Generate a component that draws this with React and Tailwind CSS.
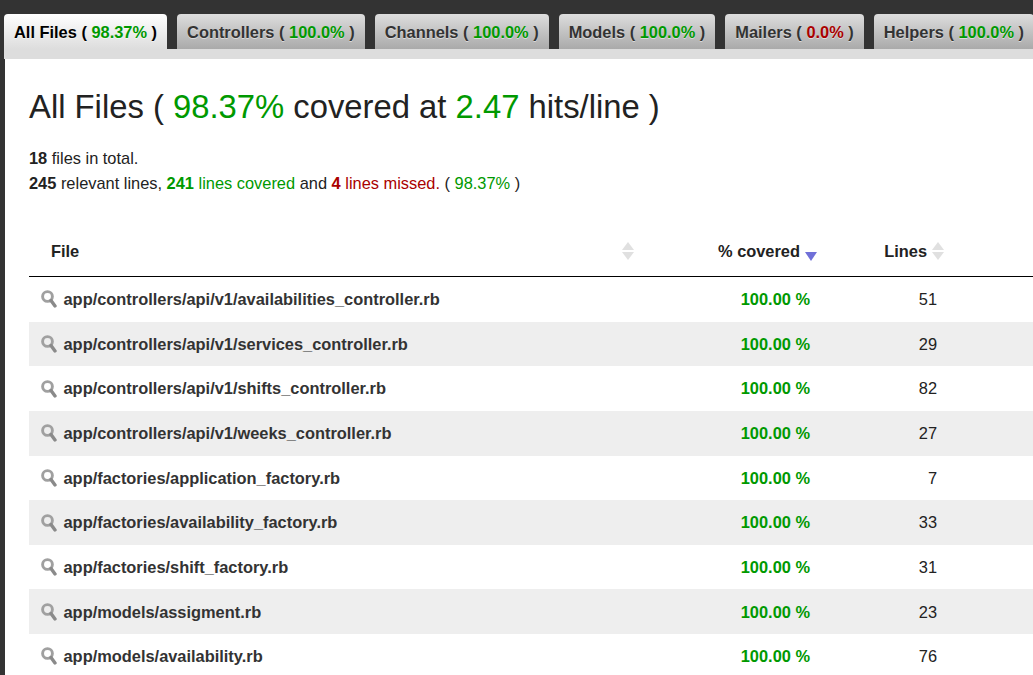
const tabs = [
  { name: 'All Files', pct: '98.37%', active: true },
  { name: 'Controllers', pct: '100.0%' },
  { name: 'Channels', pct: '100.0%' },
  { name: 'Models', pct: '100.0%' },
  { name: 'Mailers', pct: '0.0%', bad: true },
  { name: 'Helpers', pct: '100.0%' },
]

const files = [
  ['app/controllers/api/v1/availabilities_controller.rb', 51],
  ['app/controllers/api/v1/services_controller.rb', 29],
  ['app/controllers/api/v1/shifts_controller.rb', 82],
  ['app/controllers/api/v1/weeks_controller.rb', 27],
  ['app/factories/application_factory.rb', 7],
  ['app/factories/availability_factory.rb', 33],
  ['app/factories/shift_factory.rb', 31],
  ['app/models/assigment.rb', 23],
  ['app/models/availability.rb', 76],
]

function SortArrows({ className }) {
  return (
    <svg width="12" height="18" viewBox="0 0 12 18" className={className}>
      <path d="M6 0 L12 8 H0 Z" fill="#e0e0e0" />
      <path d="M0 10 H12 L6 18 Z" fill="#e0e0e0" />
    </svg>
  )
}

function Magnifier() {
  return (
    <svg width="16" height="18" viewBox="0 0 16 18" className="shrink-0">
      <circle cx="6.5" cy="6.5" r="4.9" fill="none" stroke="#a0a0a0" strokeWidth="2.9" />
      <path d="M10 10.5 L14 16" stroke="#8a8a8a" strokeWidth="3.4" strokeLinecap="round" />
    </svg>
  )
}

export default function App() {
  return (
    <div className="h-[675px] w-[1033px] overflow-hidden bg-[#333] font-['Liberation_Sans',Arial,sans-serif] text-[#222]">
      <ul className="flex gap-[10px] pl-1 pt-[14px] whitespace-nowrap">
        {tabs.map(tab => (
          <li
            key={tab.name}
            className={
              'h-[35px] shrink-0 rounded-t-[4px] px-[10px] pt-[9px] text-[16.4px] leading-[18px] font-bold [text-shadow:0_1px_0_rgba(255,255,255,0.5)] ' +
              (tab.active
                ? 'bg-gradient-to-b from-white to-[#ddd] text-black'
                : 'bg-gradient-to-b from-[#ddd] to-[#aaa] text-[#333]')
            }
          >
            {tab.name} ({' '}
            <span className={tab.bad ? 'text-[#a00]' : 'text-[#090]'}>{tab.pct}</span> )
          </li>
        ))}
      </ul>

      <div className="ml-1 h-[10px] bg-[#ddd]" />

      <div className="ml-[5px] h-full bg-white pl-6">
        <h2 className="pt-[29px] text-[32.8px] leading-[38px] font-normal">
          All Files ( <span className="text-[#090]">98.37%</span> covered at{' '}
          <span className="text-[#090]">2.47</span> hits/line )
        </h2>

        <div className="mt-[20px] text-[16.4px] leading-[25px]">
          <div>
            <b>18</b> files in total.
          </div>
          <div>
            <b>245</b> relevant lines, <b className="text-[#090]">241</b>{' '}
            <span className="text-[#090]">lines covered</span> and <b className="text-[#a00]">4</b>{' '}
            <span className="text-[#a00]">lines missed.</span> ({' '}
            <span className="text-[#090]">98.37%</span> )
          </div>
        </div>

        <div className="mt-[29px]">
          <div className="flex h-[52px] items-center border-b border-black pt-[1px] text-[16.4px] font-bold">
            <div className="flex w-[605px] items-center justify-between pl-[22px]">
              <span>File</span>
              <SortArrows className="mt-[1px]" />
            </div>
            <div className="flex w-[183px] items-center justify-end">
              <span>% covered</span>
              <svg width="12" height="9" viewBox="0 0 12 9" className="mt-[11px] ml-[5px]">
                <path d="M0 0 H12 L6 9 Z" fill="#7070d8" />
              </svg>
            </div>
            <div className="flex w-[127px] items-center justify-end">
              <span>Lines</span>
              <SortArrows className="mt-[1px] ml-[5px]" />
            </div>
          </div>

          {files.map(([path, lines], i) => (
            <div
              key={path}
              className={'flex h-[44.65px] items-center text-[16.4px] ' + (i % 2 ? 'bg-[#eee]' : 'bg-white')}
            >
              <div className="flex w-[605px] items-center gap-[2px] pl-[12px] font-bold text-[#333]">
                <Magnifier />
                <span className="ml-[4.5px]">{path}</span>
              </div>
              <div className="w-[176px] text-right font-bold text-[#090]">100.00 %</div>
              <div className="w-[127px] text-right">{lines}</div>
            </div>
          ))}
        </div>
      </div>
    </div>
  )
}
